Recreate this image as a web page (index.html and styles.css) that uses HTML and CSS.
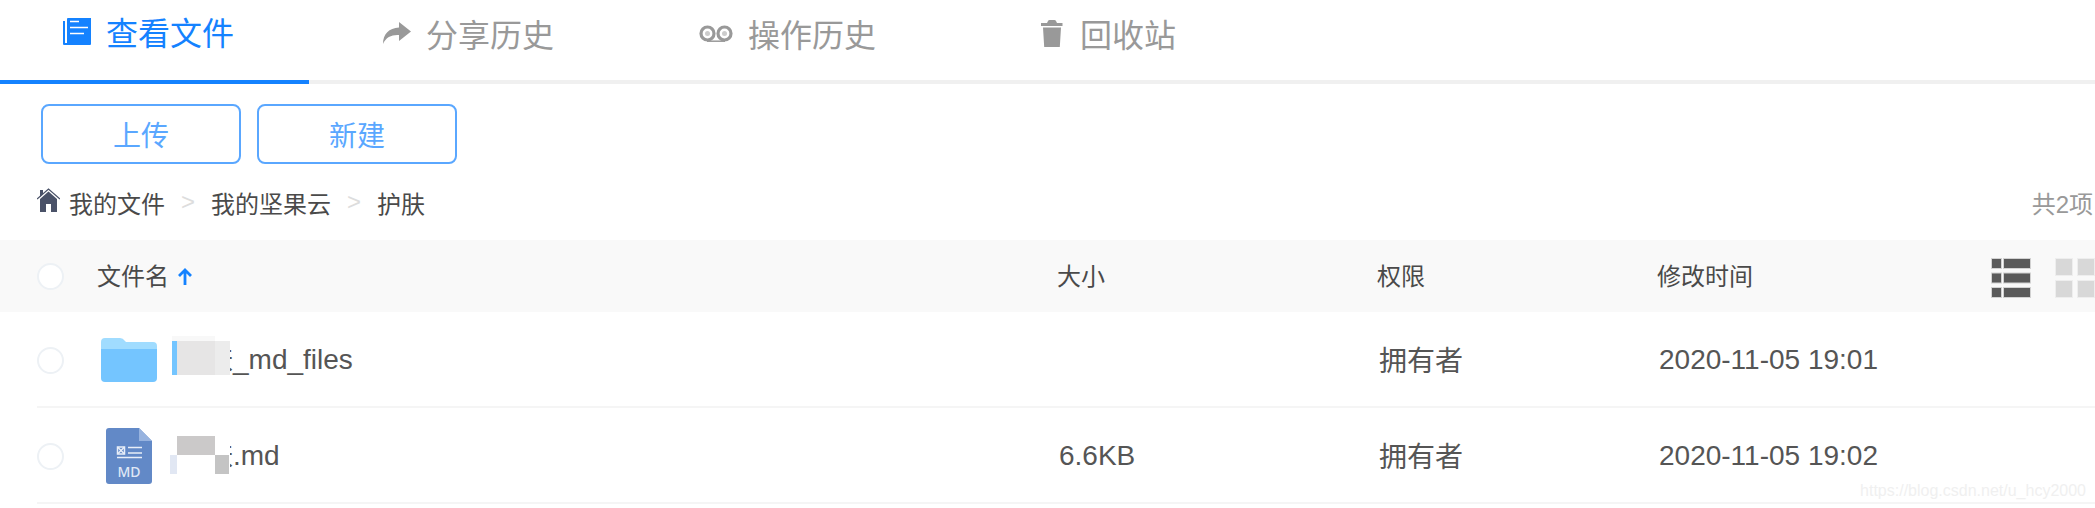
FILE: index.html
```html
<!DOCTYPE html>
<html>
<head>
	<meta charset="utf-8">
	<meta name="viewport" content="width=device-width, initial-scale=1">
	<title>文件</title>
	<link rel="stylesheet" href="styles.css">
</head>
<body>
	<div class="tabs">
		<div class="tab tab-first active">
			<svg class="tab-icon" width="28" height="27" viewBox="0 0 28 27"><path fill="#1482ff" d="M0 3h2v21.500q0 .5 .5 .5H4V1q0-1 1-1h23v26q0 1-1 1H1q-1 0-1-1z"/><path stroke="#fff" stroke-width="1.300" d="M7 3.500h9M7 9.500h18M7 15.500h14"/></svg>
			查看文件
		</div>
		<div class="tab">
			<svg class="tab-icon" width="28" height="22" viewBox="0 0 28 22"><path fill="#999" d="M16 0l12 9.500L16 19v-6C9 12.500 3 15 0 22 0 12 6 6 16 5.500z"/></svg>
			分享历史
		</div>
		<div class="tab tab-third">
			<svg class="tab-icon" width="34" height="17" viewBox="0 0 34 17"><g fill="none" stroke="#999" stroke-width="3.200"><circle cx="8.500" cy="8.500" r="6.500"/><circle cx="25.500" cy="8.500" r="6.500"/></g><circle cx="8.500" cy="8.500" r="2.500" fill="#ccc"/><circle cx="25.500" cy="8.500" r="2.500" fill="#ccc"/><path stroke="#999" stroke-width="1.500" d="M8 16.200h18"/></svg>
			操作历史
		</div>
		<div class="tab tab-fourth">
			<svg class="tab-icon" width="22" height="27" viewBox="0 0 22 27"><path fill="#999" d="M6 3l1-2q.5-1 1.500-1h5q1 0 1.500 1l1 2h5.500v3H0V3zM2 7.500h18L18.800 27H3.200z"/></svg>
			回收站
		</div>
	</div>

	<div class="actions">
		<button class="btn">上传</button>
		<button class="btn">新建</button>
	</div>

	<div class="crumbs">
		<svg class="home" width="23" height="24" viewBox="0 0 23 24"><path fill="none" stroke="#4a5268" stroke-width="1.300" d="M0 11L11.500 1 23 11"/><path fill="#4a5268" d="M3 2h3v4l-3 3zM3 11l8.500-7.500L20 11v13h-6v-8H9v8H3z"/></svg>
		<span class="crumb crumb-home">我的文件</span>
		<span class="sep">&gt;</span>
		<span class="crumb">我的坚果云</span>
		<span class="sep">&gt;</span>
		<span class="crumb">护肤</span>
		<span class="count">共2项</span>
	</div>

	<div class="head">
		<div class="row-grid">
			<span class="check"></span>
			<span class="label">文件名 <svg class="sort" width="14" height="17" viewBox="0 0 14 17"><path fill="none" stroke="#1482ff" stroke-width="2.800" d="M7 17V2M1 8l6-6 6 6"/></svg></span>
			<span class="label">大小</span>
			<span class="label">权限</span>
			<div class="time-head">
				<span class="label">修改时间</span>
				<div class="views">
					<svg width="40" height="40" viewBox="0 0 40 40"><g fill="#5a5a5a" stroke="#d2d2d2"><rect x=".5" y=".5" width="10" height="10"/><rect x="12.500" y=".5" width="27" height="10"/><rect x=".5" y="15" width="10" height="10"/><rect x="12.500" y="15" width="27" height="10"/><rect x=".5" y="29.500" width="10" height="10"/><rect x="12.500" y="29.500" width="27" height="10"/></g></svg>
					<svg width="40" height="40" viewBox="0 0 40 40"><g fill="#d8d8d8" stroke="#eee"><rect x=".5" y=".5" width="17" height="17"/><rect x="22.500" y=".5" width="17" height="17"/><rect x=".5" y="22.500" width="17" height="17"/><rect x="22.500" y="22.500" width="17" height="17"/></g></svg>
				</div>
			</div>
		</div>
	</div>

	<div class="row row-grid">
		<span class="check"></span>
		<div class="name">
			<div class="file-icon">
				<svg width="56" height="44" viewBox="0 0 56 44"><path fill="#a0dcff" d="M4 0h15q3 0 5 3l1 1h27q4 0 4 4v8H0V4q0-4 4-4z"/><path fill="#74c5ff" d="M0 11h56v29q0 4-4 4H4q-4 0-4-4z"/></svg>
			</div>
			<span class="name-text">护肤_md_files
				<i class="cover"></i><i class="mask mask-faint"></i><i class="mask mask-bar"></i><i class="mask mask-gray"></i><i class="mask mask-pale"></i>
			</span>
		</div>
		<span></span>
		<span class="cell">拥有者</span>
		<span class="cell num">2020-11-05 19:01</span>
	</div>

	<div class="row row-grid">
		<span class="check"></span>
		<div class="name">
			<div class="file-icon">
				<svg width="46" height="56" viewBox="0 0 46 56"><path fill="#6289c7" d="M3 0h30l13 13v40q0 3-3 3H3q-3 0-3-3V3q0-3 3-3z"/><path fill="#97b3df" d="M33 0l13 13H33z"/><g fill="none" stroke="#e8eef8" stroke-width="1.500"><rect x="11.500" y="19" width="7" height="7"/><path d="M11.500 19l7 7M18.500 19l-7 7M22 19.500h14M22 25h14M11 29.500h25"/></g><text class="md-label" x="23" y="49" text-anchor="middle">MD</text></svg>
			</div>
			<span class="name-text">护肤.md
				<i class="cover cover-short"></i><i class="mask mask-top"></i><i class="mask mask-left"></i><i class="mask mask-right"></i>
			</span>
		</div>
		<span class="cell num">6.6KB</span>
		<span class="cell">拥有者</span>
		<span class="cell num">2020-11-05 19:02</span>
	</div>

	<div class="watermark">https://blog.csdn.net/u_hcy2000</div>
</body>
</html>
```

FILE: styles.css
```css
body{
	margin: 0;
	height: 508px;
	overflow: hidden;
	position: relative;
	background: #fff;
	color: #555;
	font-family: "Liberation Sans", "Noto Sans CJK SC", sans-serif;
}
.tabs{
	display: flex;
	height: 80px;
	border-bottom: 4px solid #f0f0f0;
}
.tab{
	display: flex;
	align-items: center;
	height: 66px;
	padding: 0 74px;
	font-size: 32px;
	color: #999;
}
.tab-first{
	padding-left: 63px;
	padding-right: 75px;
}
.tab-third{
	padding-left: 71px;
}
.tab-fourth{
	padding-left: 91px;
}
.tab-icon{
	margin-right: 15px;
}
.tab-fourth .tab-icon{
	margin-right: 17px;
}
.active{
	height: 84px;
	padding-bottom: 18px;
	box-sizing: border-box;
	border-bottom: 4px solid #1482ff;
	color: #1482ff;
}
.actions{
	display: flex;
	gap: 16px;
	padding: 20px 0 0 41px;
}
.btn{
	width: 200px;
	height: 60px;
	background: #fff;
	border: 2px solid #5aa7ff;
	border-radius: 8px;
	color: #5aa7ff;
	font-family: inherit;
	font-size: 28px;
}
.crumbs{
	display: flex;
	align-items: center;
	height: 76px;
	padding: 0 2px 0 37px;
	font-size: 24px;
	color: #4a4a4a;
}
.home{
	margin: -4px 0 0 0;
}
.crumb-home{
	margin-left: 9px;
}
.sep{
	margin: 0 16px;
	color: #ddd;
}
.count{
	margin-left: auto;
	color: #999;
}
.head{
	height: 72px;
	padding-left: 37px;
	background: #f9f9f9;
	font-size: 24px;
	color: #4a4a4a;
}
.label{
	padding-bottom: 4px;
}
.row-grid{
	display: grid;
	grid-template-columns: 60px 960px 320px 280px 1fr;
	align-items: center;
	height: 100%;
}
.row{
	height: 96px;
	box-sizing: border-box;
	margin-left: 37px;
	border-bottom: 2px solid #f5f5f5;
	font-size: 28px;
}
.cell{
	padding-left: 2px;
}
.num{
	padding-top: 2px;
}
.check{
	width: 27px;
	height: 27px;
	box-sizing: border-box;
	background: #fff;
	border: 2px solid #edf1f5;
	border-radius: 50%;
}
.row .check{
	margin-top: 2px;
}
.sort{
	vertical-align: 0;
	margin-left: 2px;
}
.time-head{
	display: flex;
	align-items: center;
	justify-content: space-between;
}
.views{
	display: flex;
	gap: 24px;
	margin-top: 4px;
}
.views svg{
	display: block;
}
.name{
	display: flex;
	align-items: center;
	padding-left: 4px;
}
.file-icon{
	display: flex;
	justify-content: center;
	width: 56px;
	margin: 2px 20px 0 0;
}
.name-text{
	position: relative;
	line-height: 40px;
	margin-top: 2px;
}
.cover, .mask{
	position: absolute;
	display: block;
}
.cover{
	left: 0;
	top: -1px;
	width: 53px;
	height: 40px;
	background: #fff;
}
.mask-faint{
	left: -5px;
	top: -4px;
	width: 43px;
	height: 5px;
	background: #f8f8f8;
}
.mask-bar{
	left: -5px;
	top: 1px;
	width: 5px;
	height: 34px;
	background: #74c5ff;
}
.mask-gray{
	left: 0;
	top: 1px;
	width: 38px;
	height: 34px;
	background: #e6e5e5;
}
.mask-pale{
	left: 38px;
	top: 1px;
	width: 15px;
	height: 34px;
	background: #ececec;
}
.mask-top{
	left: 0;
	top: 0;
	width: 38px;
	height: 19px;
	background: #cbc9c9;
}
.mask-left{
	left: -7px;
	top: 19px;
	width: 7px;
	height: 19px;
	background: #e1e7f3;
}
.mask-right{
	left: 38px;
	top: 19px;
	width: 14px;
	height: 19px;
	background: #c4c4c4;
}
.md-label{
	fill: #dfe7f5;
	font-family: "Noto Sans", sans-serif;
	font-size: 14px;
	font-weight: 500;
}
.watermark{
	position: absolute;
	right: 9px;
	bottom: 8px;
	font-size: 16px;
	color: #f0f0f0;
}
```
